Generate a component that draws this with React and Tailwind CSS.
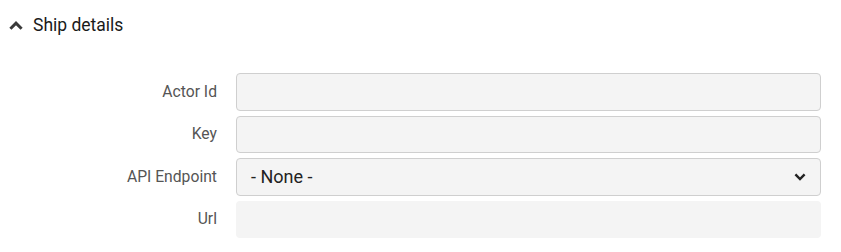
import React from "react";

function ChevronUp() {
  return (
    <svg width="14" height="9" viewBox="0 0 14 9" className="shrink-0">
      <path d="M1.4 7.8 L7 2.2 L12.6 7.8" fill="none" stroke="#3a3a3a" strokeWidth="3" />
    </svg>
  );
}

function ChevronDown() {
  return (
    <svg width="12" height="8" viewBox="0 0 12 8">
      <path d="M1.4 1.4 L6 6 L10.6 1.4" fill="none" stroke="#222" strokeWidth="2.4" />
    </svg>
  );
}

function Row({ label, children }) {
  return (
    <div className="flex items-center gap-[19px]">
      <label className="w-[217px] shrink-0 text-right text-[15.7px] text-[#555]">{label}</label>
      {children}
    </div>
  );
}

export default function App() {
  return (
    <div className="w-[841px] h-[252px] bg-white font-['Roboto',sans-serif]">
      <button className="flex items-center gap-[10px] pl-[9px] pt-[14px] h-[36px] text-[17.5px] text-[#1a1a1a]">
        <ChevronUp />
        <span>Ship details</span>
      </button>

      <div className="mt-[37px] pr-[20px] flex flex-col gap-[5px]">
        <Row label="Actor Id">
          <input className="flex-1 h-[37.5px] rounded-[4px] border border-[#cfcfcf] bg-[#f4f4f4]" />
        </Row>
        <Row label="Key">
          <input className="flex-1 h-[37.5px] rounded-[4px] border border-[#cfcfcf] bg-[#f4f4f4]" />
        </Row>
        <Row label="API Endpoint">
          <div className="flex-1 h-[37.5px] rounded-[4px] border border-[#cfcfcf] bg-[#f4f4f4] flex items-center justify-between pl-[14px] pr-[14px]">
            <span className="text-[18px] text-[#222]">- None -</span>
            <ChevronDown />
          </div>
        </Row>
        <Row label="Url">
          <div className="flex-1 h-[37.5px] rounded-[4px] bg-[#f4f4f4]" />
        </Row>
      </div>
    </div>
  );
}
